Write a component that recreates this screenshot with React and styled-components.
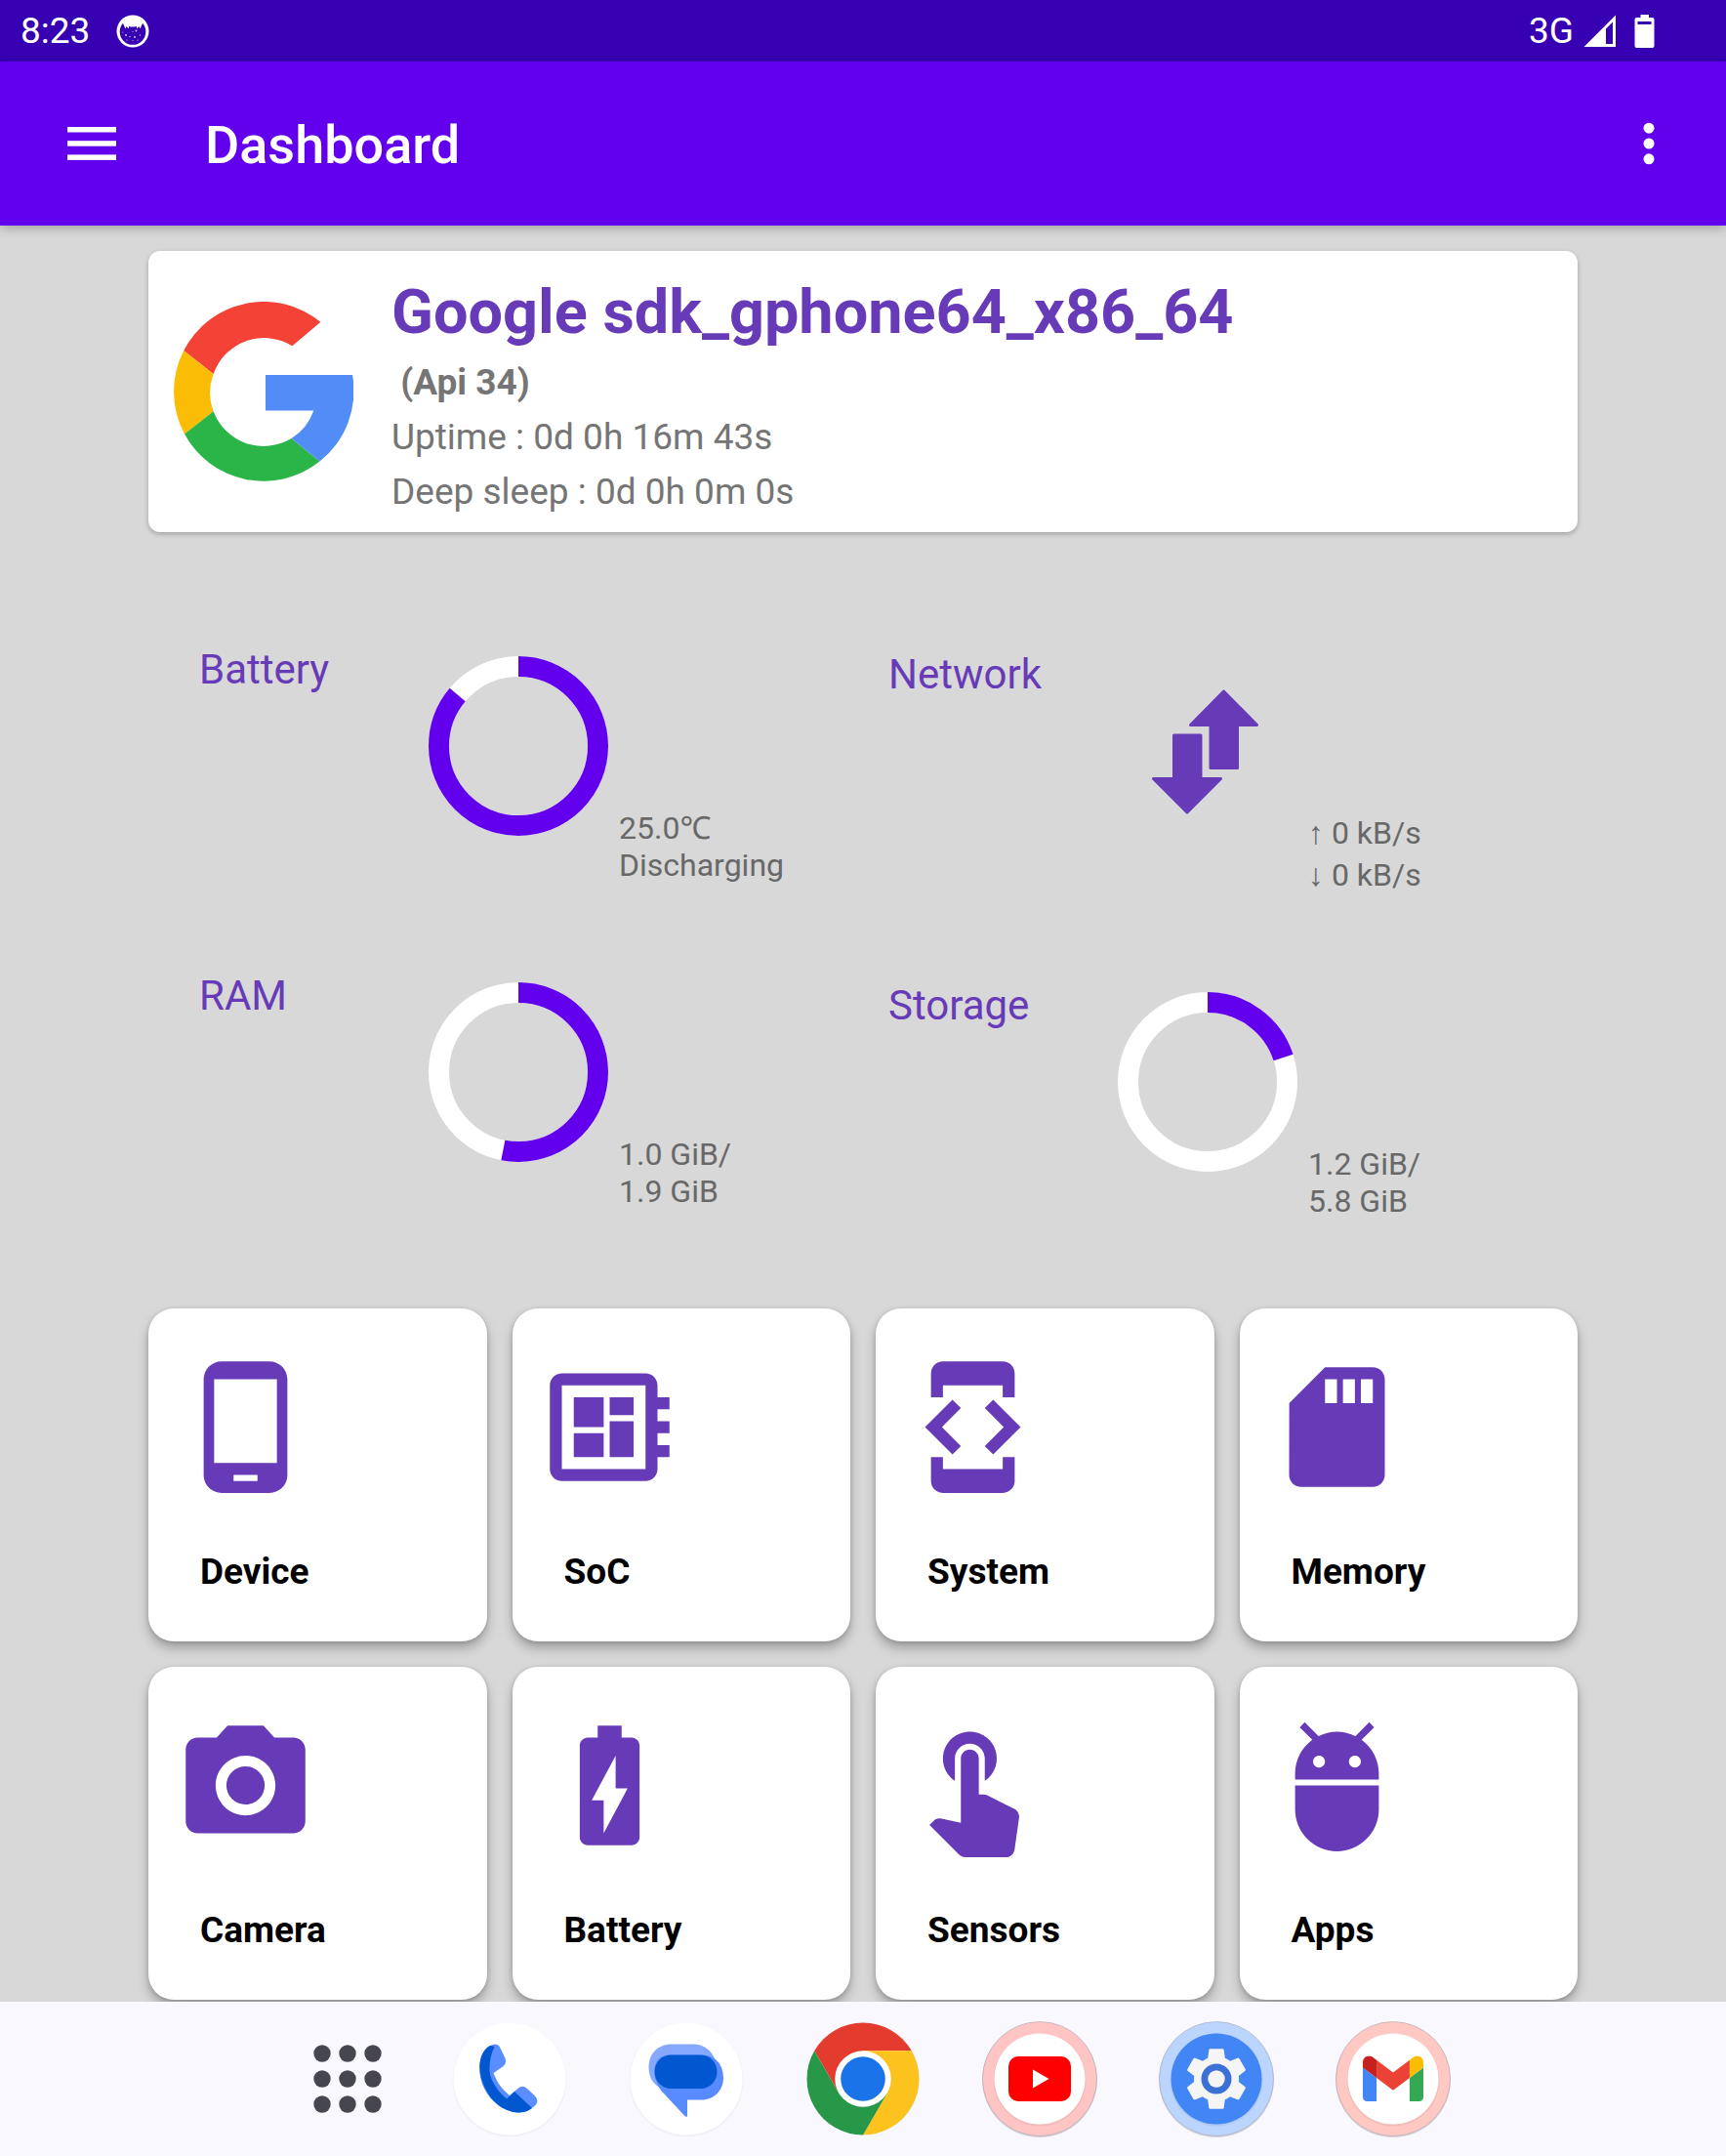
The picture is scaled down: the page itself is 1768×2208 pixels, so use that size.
import React from "react";
import styled, { createGlobalStyle } from "styled-components";

const color = {
  status: "#3700b3",
  primary: "#6200ee",
  accent: "#673ab7",
  page: "#d8d8d8",
  card: "#ffffff",
  muted: "#757575",
  value: "#686868",
  dock: "#f9f8ff",
  dots: "#45464f",
};

const GlobalStyle = createGlobalStyle`
  * { box-sizing: border-box; }
  body {
    margin: 0;
    background: ${color.page};
    font-family: Roboto, "Noto Sans", sans-serif;
  }
  button {
    border: 0;
    padding: 0;
    background: none;
    color: inherit;
    font: inherit;
    cursor: pointer;
  }
  svg { display: block; flex: none; }
`;

const Screen = styled.div`
  min-height: 100vh;
  display: flex;
  flex-direction: column;
`;

const StatusBar = styled.div`
  display: flex;
  justify-content: space-between;
  height: 63px;
  padding: 0 64px 0 21px;
  background: ${color.status};
  color: #fff;
  font-size: 37px;
  line-height: 63px;
`;

const StatusGroup = styled.div`
  display: flex;
  align-items: center;
  gap: ${(p) => p.$gap}px;
`;

const AppBar = styled.header`
  position: relative;
  display: flex;
  align-items: center;
  height: 168px;
  padding: 0 32px 0 47px;
  background: ${color.primary};
  color: #fff;
  box-shadow: 0 3px 10px rgba(0, 0, 0, 0.24);
`;

const BarButton = styled.button`
  display: flex;
  align-items: center;
  justify-content: center;
  width: 94px;
  height: 126px;
`;

const Title = styled.h1`
  flex: 1;
  margin: 0;
  padding: 2px 0 0 69px;
  font-size: 54px;
  line-height: 63px;
  font-weight: 500;
`;

const Content = styled.main`
  flex: 1;
  padding: 26px 152px 2px;
`;

const DeviceCard = styled.section`
  display: flex;
  align-items: flex-start;
  gap: 39px;
  padding: 26px 26px 20px;
  border-radius: 12px;
  background: ${color.card};
  box-shadow: 0 2px 5px rgba(0, 0, 0, 0.26);
`;

const BrandLogo = styled.div`
  padding-top: 26px;
`;

const DeviceInfo = styled.div`
  display: flex;
  flex-direction: column;
  gap: 13px;
`;

const DeviceName = styled.h2`
  margin: 0;
  color: ${color.accent};
  font-size: 63px;
  line-height: 74px;
  font-weight: 700;
`;

const DeviceLine = styled.p`
  margin: 0;
  color: ${color.muted};
  font-size: 37px;
  line-height: 43px;
  font-weight: ${(p) => (p.$strong ? 700 : 400)};
  white-space: pre;
`;

const Stats = styled.section`
  display: grid;
  grid-template-columns: 1fr 1fr;
  padding: 116px 26px 91px;
`;

const StatColumn = styled.div`
  display: flex;
  flex-direction: column;
  gap: 90px;
  padding-top: ${(p) => p.$inset || 0}px;
`;

const StatCell = styled.div`
  display: grid;
  grid-template-columns: 1fr 184px 1fr;
  align-items: start;
`;

const StatLabel = styled.h3`
  margin: 0;
  padding-left: 26px;
  color: ${color.accent};
  font-size: 42px;
  line-height: 49px;
  font-weight: 400;
`;

const StatFigure = styled.div`
  padding-top: 11px;
`;

const StatValue = styled.div`
  display: flex;
  flex-direction: column;
  gap: ${(p) => p.$gap || 0}px;
  padding: 168px 0 0 11px;
  color: ${color.value};
  font-size: 32px;
  line-height: 38px;
  white-space: nowrap;
`;

const StatLine = styled.span`
  height: 38px;
`;

const Tiles = styled.nav`
  display: grid;
  grid-template-columns: repeat(4, 1fr);
  gap: 26px;
`;

const Tile = styled.button`
  display: flex;
  flex-direction: column;
  align-items: flex-start;
  gap: 53px;
  padding: 48px 26px 50px;
  border-radius: 26px;
  background: ${color.card};
  box-shadow: 0 7px 12px rgba(0, 0, 0, 0.26), 0 1px 4px rgba(0, 0, 0, 0.16);
  text-align: left;
`;

const TileIcon = styled.svg`
  width: 147px;
  height: 147px;
  fill: ${color.accent};
`;

const TileLabel = styled.span`
  padding-left: 27px;
  color: #000;
  font-size: 37px;
  line-height: 43px;
  font-weight: 700;
`;

const Dock = styled.footer`
  position: sticky;
  bottom: 0;
  z-index: 1;
  display: flex;
  justify-content: center;
  gap: 63px;
  padding: 20px 0;
  background: ${color.dock};
`;

const DockButton = styled.button`
  display: flex;
  justify-content: flex-end;
  width: 118px;
  height: 118px;
`;

const RING_RADIUS = 81.5;
const RING_LENGTH = 2 * Math.PI * RING_RADIUS;

function Ring({ percent, label }) {
  return (
    <svg width="184" height="184" viewBox="0 0 184 184" role="img" aria-label={label}>
      <g fill="none" strokeWidth="21" transform="rotate(-90 92 92)">
        <circle cx="92" cy="92" r={RING_RADIUS} stroke="#fff" />
        <circle
          cx="92"
          cy="92"
          r={RING_RADIUS}
          stroke={color.primary}
          strokeDasharray={`${(RING_LENGTH * percent) / 100} ${RING_LENGTH}`}
        />
      </g>
    </svg>
  );
}

function TransferArrows() {
  return (
    <svg width="184" height="184" viewBox="0 0 184 184" fill={color.accent} stroke={color.accent} strokeWidth="3" strokeLinejoin="round" aria-hidden="true">
      <path d="M108.500 31 L142.500 65.500 H122.500 V109.500 H95 V65.500 H74.500 Z" />
      <path d="M57.500 76 H85 V120.500 H105.500 L71 155 L36.500 120.500 H57.500 Z" />
    </svg>
  );
}

function Stat({ label, figure, values, gap }) {
  return (
    <StatCell>
      <StatLabel>{label}</StatLabel>
      <StatFigure>{figure}</StatFigure>
      <StatValue $gap={gap}>
        {values.map((v) => (
          <StatLine key={v}>{v}</StatLine>
        ))}
      </StatValue>
    </StatCell>
  );
}

function GoogleLogo() {
  return (
    <svg width="184" height="184" viewBox="0 0 184 184" role="img" aria-label="Google">
      <path fill="#f44336" d="M10.200 50 A92 92 0 0 1 150.400 20.800 L121.400 45.300 A55 55 0 0 0 40.600 74 Z" />
      <path fill="#fbbc05" d="M10.200 50 A92 92 0 0 0 11 135.500 L40.600 112.300 A55 55 0 0 1 40.600 74 Z" />
      <path fill="#2bb548" d="M11 135.500 A92 92 0 0 0 149.500 163.500 L120.500 140 A55 55 0 0 1 40.600 112.300 Z" />
      <path fill="#528df7" d="M149.500 163.500 A92 92 0 0 0 183 75 H94 V111.500 H143.300 A55 55 0 0 1 120.500 140 Z" />
    </svg>
  );
}

function CatBadge() {
  return (
    <svg width="34" height="34" viewBox="0 0 34 34" aria-hidden="true">
      <circle cx="17" cy="17" r="16.500" fill="#fff" />
      <circle cx="17" cy="17.500" r="13.300" fill={color.status} />
      <path fill="#fff" d="M4.500 7 L7 9 L9.500 14.500 L10.500 12 L13 14.500 V12 Q17 13 21 12 V14.500 L23.500 12 L24.500 14.500 L27 9 L29.500 7 L24 2 H10 Z" />
      <g fill="#fff" opacity="0.75">
        <circle cx="10" cy="21" r="1" />
        <circle cx="20.500" cy="16.500" r="1" />
        <circle cx="19" cy="23" r="1" />
        <circle cx="14" cy="22.500" r="0.700" />
        <circle cx="24.500" cy="21" r="0.700" />
        <circle cx="17" cy="17.500" r="0.600" />
        <circle cx="11" cy="26" r="0.600" />
        <circle cx="22" cy="26" r="0.600" />
        <circle cx="7" cy="18" r="0.600" />
        <circle cx="17" cy="26.500" r="0.600" />
      </g>
    </svg>
  );
}

const tiles = [
  ["Device", "M16 1H8C6.340 1 5 2.340 5 4v16c0 1.660 1.340 3 3 3h8c1.660 0 3-1.340 3-3V4c0-1.660-1.340-3-3-3zm-2 20h-4v-1h4v1zm3.250-3H6.750V4h10.500v14z"],
  ["SoC", "M22 9V7h-2V5c0-1.100-.9-2-2-2H4c-1.100 0-2 .9-2 2v14c0 1.100.9 2 2 2h14c1.100 0 2-.9 2-2v-2h2v-2h-2v-2h2v-2h-2V9h2zm-4 10H4V5h14v14zM6 13h5v4H6zm6-6h4v3h-4zM6 7h5v5H6zm6 4h4v6h-4z"],
  ["System", "M7 5h10v2h2V3c0-1.100-.9-1.990-2-1.990L7 1c-1.100 0-2 .9-2 2v4h2V5zm8.410 11.590L20 12l-4.590-4.590L14 8.830 17.170 12 14 15.170l1.410 1.420zM10 15.170L6.830 12 10 8.830 8.590 7.410 4 12l4.590 4.590L10 15.170zM17 19H7v-2H5v4c0 1.100.9 2 2 2h10c1.100 0 2-.9 2-2v-4h-2v2z"],
  ["Memory", "M18 2h-8L4.020 8 4 20c0 1.100.9 2 2 2h12c1.100 0 2-.9 2-2V4c0-1.100-.9-2-2-2zm-6 6h-2V4h2v4zm3 0h-2V4h2v4zm3 0h-2V4h2v4z"],
  ["Camera", "M12 8.800a3.200 3.200 0 1 0 0 6.400a3.200 3.200 0 1 0 0-6.400zM9 2L7.170 4H4c-1.100 0-2 .9-2 2v12c0 1.100.9 2 2 2h16c1.100 0 2-.9 2-2V6c0-1.100-.9-2-2-2h-3.170L15 2H9zm3 15c-2.760 0-5-2.240-5-5s2.240-5 5-5 5 2.240 5 5-2.240 5-5 5z"],
  ["Battery", "M15.670 4H14V2h-4v2H8.330C7.600 4 7 4.600 7 5.330v15.330C7 21.400 7.600 22 8.330 22h7.330c.74 0 1.340-.6 1.340-1.330V5.330C17 4.600 16.400 4 15.670 4zM11 20v-5.500H9L13 7v5.500h2L11 20z"],
  ["Sensors", "M9 11.240V7.500C9 6.120 10.120 5 11.500 5S14 6.120 14 7.500v3.740c1.210-.81 2-2.180 2-3.740C16 5.010 13.990 3 11.500 3S7 5.010 7 7.500c0 1.560.79 2.930 2 3.740zm9.840 4.630l-4.540-2.260c-.17-.07-.35-.11-.54-.11H13v-6c0-.83-.67-1.500-1.500-1.500S10 6.670 10 7.500v10.740l-3.430-.72c-.08-.01-.15-.03-.24-.03-.31 0-.59.130-.79.330l-.79.8 4.940 4.940c.270.270.650.440 1.060.440h6.790c.75 0 1.330-.55 1.440-1.280l.75-5.270c.01-.07.02-.14.02-.2 0-.62-.38-1.160-.91-1.380z"],
  ["Apps", "M5 16c0 3.870 3.130 7 7 7s7-3.130 7-7v-4H5v4zM16.120 4.370l2.100-2.100-.82-.83-2.300 2.310C14.160 3.280 13.120 3 12 3s-2.160.28-3.090.75L6.600 1.440l-.82.83 2.100 2.100C6.140 5.640 5 7.680 5 10v1h14v-1c0-2.320-1.140-4.360-2.880-5.630zM9 9c-.55 0-1-.45-1-1s.45-1 1-1 1 .45 1 1-.45 1-1 1zm6 0c-.55 0-1-.45-1-1s.45-1 1-1 1 .45 1 1-.45 1-1 1z"],
];

function DockIcon({ children }) {
  return (
    <svg width="118" height="118" viewBox="0 0 118 118" overflow="visible" aria-hidden="true">
      {children}
    </svg>
  );
}

function Badge({ outer, inner }) {
  return (
    <>
      <circle cx="59" cy="60" r="59" fill="#000" opacity="0.14" />
      <circle cx="59" cy="59" r="58.500" fill={outer} stroke="#9d9daa" strokeOpacity="0.5" />
      <circle cx="59" cy="60" r="47.500" fill="#000" opacity="0.05" />
      <circle cx="59" cy="59" r="46.500" fill={inner} />
    </>
  );
}

function PlainDisc() {
  return (
    <>
      <circle cx="59" cy="60" r="58.500" fill="#000" opacity="0.03" />
      <circle cx="59" cy="59" r="57.500" fill="#fff" />
    </>
  );
}

const dockApps = [
  [
    "Phone",
    <>
      <PlainDisc />
      <path fill="#5a8dff" d="M36 27 Q40 23.500 44 23.500 Q48 23.500 49.500 27.500 L54.500 38 Q56.500 43.500 52 46.500 L42.500 53 Q47 66 59 76 L68 68.500 Q72.500 65 77 69 L85 76.500 Q89.500 81.500 85.500 86 Q78 93.500 68 93.500 C46 92 28 72 28 47 Q28.500 34 36 27 Z" />
      <path fill="#0057d0" d="M38 25.500 C29 31 26.500 45 30 58 C36 80 52 93 68 93.500 Q76 93.500 82 89 L64 72 L56 79.500 C45 70 39.500 60 38.500 51.500 C38 42 40 33 43.500 26.500 Q41 24 38 25.500 Z" />
    </>,
  ],
  [
    "Messages",
    <>
      <PlainDisc />
      <path fill="#86a9ff" d="M44 23.500 H66 C80 23.500 90 34 90 50 Q90 62 80 68 H32 C24 64 20.500 56 20.500 47 C20.500 33 30 23.500 44 23.500 Z" />
      <path fill="#578bff" d="M43 34.500 H74 Q84 34.500 89 39 Q97 46 97 58 C97 71 87 80.500 75 80.500 H60 V96 Q60 99.500 57 96.500 L36 74 C30 68 26.500 60 26.500 51 Q26.500 34.500 43 34.500 Z" />
      <rect x="26.500" y="34.500" width="64" height="34.500" rx="17" fill="#0057d0" />
    </>,
  ],
  [
    "Chrome",
    <>
      <path fill="#e33b2e" d="M9.200 30.250 A57.500 57.500 0 0 1 108.800 30.250 H59 L34.100 73.400 Z" />
      <path fill="#fcc31e" d="M108.800 30.250 A57.500 57.500 0 0 1 59 116.500 L83.900 73.400 L59 30.250 Z" />
      <path fill="#279847" d="M59 116.500 A57.500 57.500 0 0 1 9.200 30.250 L34.100 73.400 L83.900 73.400 Z" />
      <circle cx="59" cy="59" r="28.750" fill="#fff" />
      <circle cx="59" cy="59" r="22.800" fill="#1a73e8" />
    </>,
  ],
  [
    "YouTube",
    <>
      <Badge outer="#ffc5c5" inner="#fff" />
      <rect x="27" y="36" width="64" height="46" rx="10" fill="#f00" />
      <path fill="#fff" d="M52 49.500 L68.500 59 L52 68.500 Z" />
    </>,
  ],
  [
    "Settings",
    <>
      <Badge outer="#bbd5ff" inner="#4285f4" />
      <g transform="translate(20.600 20.600) scale(3.200)">
        <path
          fill="#f5f5f5"
          d="M19.140 12.940c.04-.3.060-.61.060-.94 0-.32-.02-.64-.07-.94l2.030-1.580c.18-.14.23-.41.120-.61l-1.920-3.320c-.12-.22-.37-.29-.59-.22l-2.390.96c-.5-.38-1.030-.7-1.620-.94l-.36-2.540c-.04-.24-.24-.41-.48-.41h-3.840c-.24 0-.43.170-.47.410l-.36 2.540c-.59.240-1.130.570-1.620.940l-2.390-.96c-.22-.08-.47 0-.59.220L2.740 8.870c-.12.210-.08.470.120.610l2.030 1.580c-.05.3-.09.630-.09.940s.02.640.070.940l-2.030 1.580c-.18.140-.23.410-.12.610l1.920 3.320c.12.220.37.290.59.220l2.390-.96c.5.380 1.030.7 1.620.940l.36 2.540c.05.240.24.410.48.410h3.840c.24 0 .44-.17.470-.41l.36-2.540c.59-.24 1.130-.56 1.620-.94l2.390.96c.22.080.47 0 .59-.22l1.920-3.320c.12-.22.070-.47-.12-.61l-2.010-1.580z"
        />
      </g>
      <circle cx="59" cy="59" r="15.500" fill="#3b70d6" />
      <circle cx="59" cy="59" r="8.700" fill="#f5f5f5" />
    </>,
  ],
  [
    "Gmail",
    <>
      <Badge outer="#ffc8c2" inner="#fff" />
      <svg x="28" y="35.500" width="62" height="46.500" viewBox="52 42 88 66">
        <path fill="#4285f4" d="M58 108h14V74L52 59v43c0 3.320 2.690 6 6 6" />
        <path fill="#34a853" d="M120 108h14c3.320 0 6-2.690 6-6V59l-20 15" />
        <path fill="#fbbc04" d="M120 48v26l20-15v-8c0-7.420-8.470-11.650-14.400-7.200" />
        <path fill="#ea4335" d="M72 74V48l24 18 24-18v26L96 92" />
        <path fill="#c5221f" d="M52 51v8l20 15V48l-5.600-4.200c-5.940-4.450-14.400-.22-14.400 7.200" />
      </svg>
    </>,
  ],
];

export default function App() {
  return (
    <Screen>
      <GlobalStyle />
      <StatusBar>
        <StatusGroup $gap={27}>
          <span>8:23</span>
          <CatBadge />
        </StatusGroup>
        <StatusGroup $gap={10}>
          <span>3G</span>
          <svg width="34" height="34" viewBox="0 0 34 34" aria-hidden="true">
            <path fill="#fff" fillRule="evenodd" d="M0.500 33 L33 0.500 V33 Z M23 14.500 V30 H30 V7.500 Z" />
          </svg>
          <svg width="38" height="34" viewBox="0 0 38 34" aria-hidden="true">
            <path fill="#fff" fillRule="evenodd" d="M14.500 0 H23 V3 H26.500 Q28.500 3 28.500 5 V32 Q28.500 34 26.500 34 H10.500 Q8.500 34 8.500 32 V5 Q8.500 3 10.500 3 H14.500 Z M11.500 7 V10 H25.500 V7 Z" />
          </svg>
        </StatusGroup>
      </StatusBar>

      <AppBar>
        <BarButton type="button" aria-label="Open menu">
          <svg width="50" height="34" viewBox="0 0 50 34" fill="#fff" aria-hidden="true">
            <rect y="0" width="50" height="5.500" />
            <rect y="14.200" width="50" height="5.500" />
            <rect y="28.400" width="50" height="5.500" />
          </svg>
        </BarButton>
        <Title>Dashboard</Title>
        <BarButton type="button" aria-label="More options">
          <svg width="32" height="44" viewBox="0 0 32 44" fill="#fff" aria-hidden="true">
            <circle cx="16" cy="6.200" r="5.500" />
            <circle cx="16" cy="22" r="5.500" />
            <circle cx="16" cy="37.800" r="5.500" />
          </svg>
        </BarButton>
      </AppBar>

      <Content>
        <DeviceCard>
          <BrandLogo>
            <GoogleLogo />
          </BrandLogo>
          <DeviceInfo>
            <DeviceName>Google sdk_gphone64_x86_64</DeviceName>
            <DeviceLine $strong>{" (Api 34)"}</DeviceLine>
            <DeviceLine>Uptime : 0d 0h 16m 43s</DeviceLine>
            <DeviceLine>Deep sleep : 0d 0h 0m 0s</DeviceLine>
          </DeviceInfo>
        </DeviceCard>

        <Stats>
          <StatColumn>
            <Stat label="Battery" figure={<Ring percent={86} label="Battery level" />} values={["25.0℃", "Discharging"]} />
            <Stat label="RAM" figure={<Ring percent={53} label="RAM in use" />} values={["1.0 GiB/", "1.9 GiB"]} />
          </StatColumn>
          <StatColumn $inset={5}>
            <Stat label="Network" figure={<TransferArrows />} values={["↑ 0 kB/s", "↓ 0 kB/s"]} gap={5} />
            <Stat label="Storage" figure={<Ring percent={20} label="Storage in use" />} values={["1.2 GiB/", "5.8 GiB"]} />
          </StatColumn>
        </Stats>

        <Tiles aria-label="Sections">
          {tiles.map(([name, path]) => (
            <Tile key={name} type="button">
              <TileIcon viewBox="0 0 24 24" aria-hidden="true">
                <path d={path} />
              </TileIcon>
              <TileLabel>{name}</TileLabel>
            </Tile>
          ))}
        </Tiles>
      </Content>

      <Dock>
        <DockButton type="button" aria-label="All apps">
          <svg width="88" height="118" viewBox="0 0 88 118" fill={color.dots} aria-hidden="true">
            {[33, 59, 85].map((y) => [18, 44, 70].map((x) => <circle key={`${x}-${y}`} cx={x} cy={y} r="8.700" />))}
          </svg>
        </DockButton>
        {dockApps.map(([name, art]) => (
          <DockButton key={name} type="button" aria-label={name}>
            <DockIcon>{art}</DockIcon>
          </DockButton>
        ))}
      </Dock>
    </Screen>
  );
}
